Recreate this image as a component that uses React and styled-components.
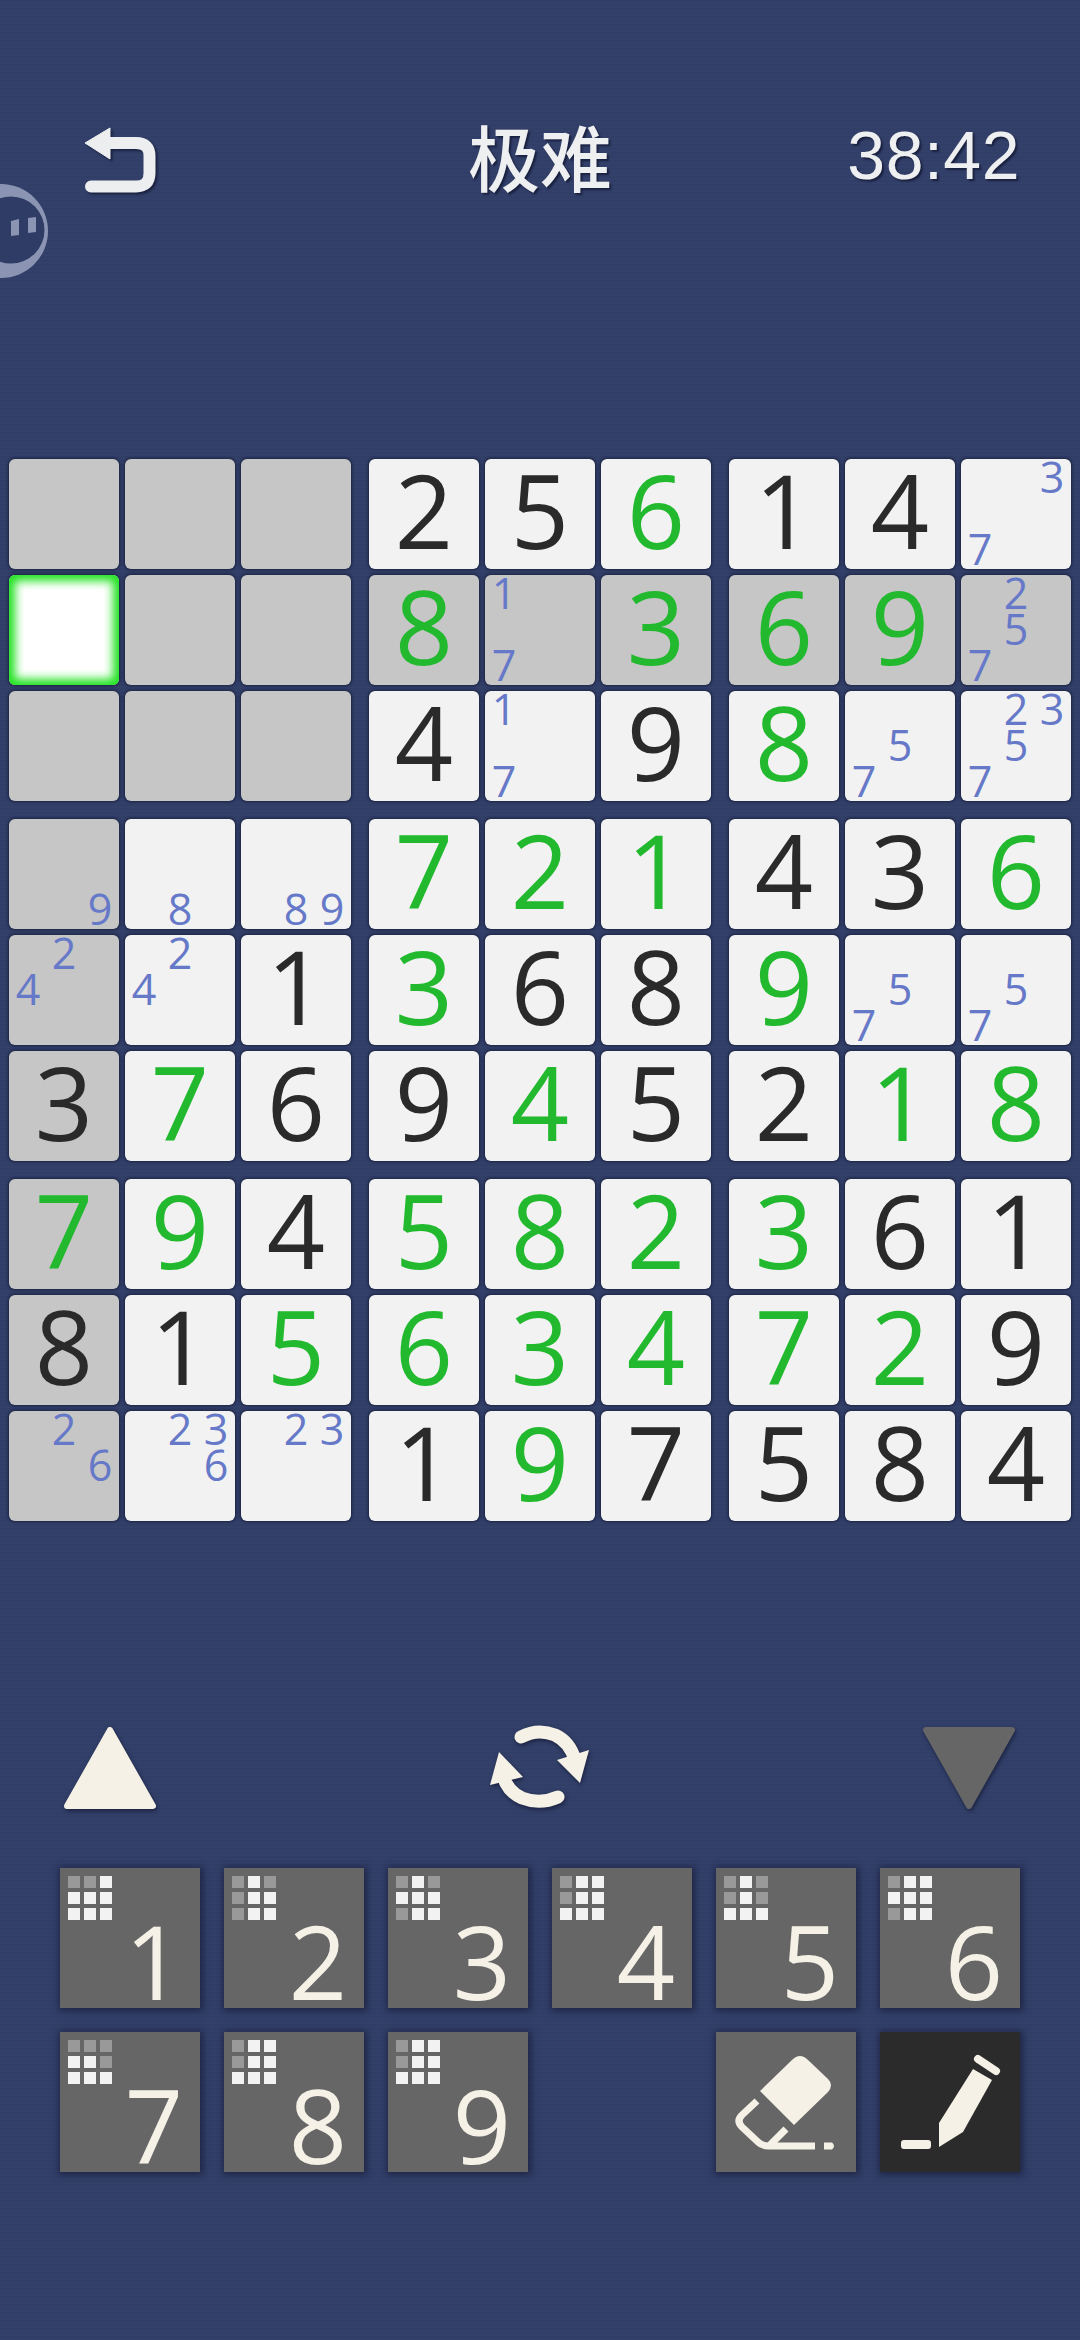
import React from 'react';
import styled, { createGlobalStyle, css } from 'styled-components';

const GlobalStyle = createGlobalStyle`
  html, body {
    margin: 0;
    padding: 0;
    background: #323f68;
  }
`;

const DIGIT_FONT = `"Open Sans", "Noto Sans", sans-serif`;

const Page = styled.div`
  position: relative;
  width: 1080px;
  height: 2340px;
  overflow: hidden;
  padding-top: 120px;
  box-sizing: border-box;
  background: repeating-linear-gradient(0deg, #334069 0 2px, #313e67 2px 4px);
`;

const FloatBall = styled.svg`
  position: absolute;
  left: 0;
  top: 180px;
  width: 52px;
  height: 102px;
`;

const Header = styled.header`
  display: grid;
  grid-template-columns: 1fr auto 1fr;
  align-items: center;
  height: 80px;
  padding: 0 62px;
`;

const BackIcon = styled.svg`
  width: 74px;
  height: 67px;
  margin-left: 22px;
  filter: drop-shadow(2px 2px 1px #1a2140);
`;

const Title = styled.h1`
  margin: 0 0 10px;
  font: 500 72px/70px "Noto Sans CJK SC", sans-serif;
  color: #eeeff0;
  text-shadow: 2px 2px 2px #1a2140;
`;

const Timer = styled.div`
  justify-self: end;
  margin: 0 -2px 10px 0;
  font: 400 68px/70px "Liberation Sans", sans-serif;
  letter-spacing: 0.5px;
  color: #eeeff0;
  text-shadow: 2px 2px 2px #1a2140;
`;

const Board = styled.section`
  display: grid;
  grid-template-columns: repeat(3, 342px);
  gap: 18px;
  margin-top: 259px;
  padding: 0 9px;
`;

const Block = styled.div`
  display: grid;
  grid-template-columns: repeat(3, 110px);
  grid-auto-rows: 110px;
  gap: 6px;
`;

const Cell = styled.div`
  border-radius: 6px;
  background: ${p => (p.$grey ? '#c6c6c6' : '#f2f2f2')};
  box-shadow: 0 0 3px 1px #1b2240;
  ${p => p.$selected && css`
    background: #ffffff;
    box-shadow: 0 0 3px 1px #1b2240, inset 0 0 10px 6px #1fe21f;
  `}
`;

const Value = styled.div`
  font: 400 102px/102px ${DIGIT_FONT};
  text-align: center;
  color: ${p => (p.$given ? '#2a2a2a' : '#22b92f')};
`;

const Notes = styled.div`
  display: grid;
  grid-template-columns: repeat(3, 36px);
  grid-template-rows: repeat(3, 36px);
  padding: 1px;
`;

const Note = styled.span`
  grid-column: ${p => ((p.$n - 1) % 3) + 1};
  grid-row: ${p => Math.floor((p.$n - 1) / 3) + 1};
  font: 400 43px/34px ${DIGIT_FONT};
  text-align: center;
  color: #6679c8;
`;

const Controls = styled.div`
  display: flex;
  align-items: center;
  justify-content: space-between;
  height: 95px;
  margin-top: 199px;
  padding: 0 64px 0 63px;
`;

const ControlIcon = styled.svg`
  display: block;
  filter: drop-shadow(1px 2px 2px #1a2140);
`;

const Pad = styled.div`
  display: grid;
  grid-template-columns: repeat(6, 140px);
  grid-auto-rows: 140px;
  gap: 24px;
  margin-top: 53px;
  padding-left: 60px;
`;

const Key = styled.button`
  display: flex;
  flex-direction: column;
  justify-content: space-between;
  width: 140px;
  height: 140px;
  padding: 8px 0 8px 8px;
  border: 0;
  box-sizing: border-box;
  grid-column: ${p => p.$col || 'auto'};
  background: ${p => (p.$active ? '#2b2b2b' : '#666666')};
  box-shadow: 1px 1px 7px 2px rgba(24, 30, 60, 0.75);
`;

const IconKey = styled(Key)`
  padding: 0;
`;

const MiniGrid = styled.div`
  display: grid;
  grid-template-columns: repeat(3, 12px);
  grid-auto-rows: 12px;
  gap: 4px;
`;

const MiniDot = styled.i`
  background: ${p => (p.$dim ? '#999999' : '#f2f2f2')};
`;

const KeyDigit = styled.span`
  align-self: flex-end;
  width: 60px;
  margin-right: 16px;
  font: 400 102px/79px ${DIGIT_FONT};
  text-align: center;
  color: #f5f1e6;
`;

// g = green (entered), k = black (given), arrays are pencil notes, null = empty
const g = v => ({ v, given: false });
const k = v => ({ v, given: true });

const rows = [
  [null, null, null, k(2), k(5), g(6), k(1), k(4), [3, 7]],
  [null, null, null, g(8), [1, 7], g(3), g(6), g(9), [2, 5, 7]],
  [null, null, null, k(4), [1, 7], k(9), g(8), [5, 7], [2, 3, 5, 7]],
  [[9], [8], [8, 9], g(7), g(2), g(1), k(4), k(3), g(6)],
  [[2, 4], [2, 4], k(1), g(3), k(6), k(8), g(9), [5, 7], [5, 7]],
  [k(3), g(7), k(6), k(9), g(4), k(5), k(2), g(1), g(8)],
  [g(7), g(9), k(4), g(5), g(8), g(2), g(3), k(6), k(1)],
  [k(8), k(1), g(5), g(6), g(3), g(4), g(7), g(2), k(9)],
  [[2, 6], [2, 3, 6], [2, 3], k(1), g(9), k(7), k(5), k(8), k(4)],
];

// which squares of the little 3x3 are dimmed on each number key
const padKeys = [
  { n: 1, dim: [0, 1] },
  { n: 2, dim: [0, 2, 3, 6] },
  { n: 3, dim: [0, 2, 6] },
  { n: 4, dim: [0, 3] },
  { n: 5, dim: [0, 2, 3, 5] },
  { n: 6, dim: [0, 6] },
  { n: 7, dim: [0, 1, 2, 5] },
  { n: 8, dim: [0, 3] },
  { n: 9, dim: [0, 3] },
];

const isGrey = (r, c) => r === 1 || c === 0 || (r < 3 && c < 3);

const SudokuCell = ({ data, r, c }) => {
  const selected = r === 1 && c === 0;
  return (
    <Cell $grey={isGrey(r, c)} $selected={selected}>
      {Array.isArray(data) && (
        <Notes>
          {data.map(n => <Note key={n} $n={n}>{n}</Note>)}
        </Notes>
      )}
      {data && !Array.isArray(data) && <Value $given={data.given}>{data.v}</Value>}
    </Cell>
  );
};

const blocks = [0, 1, 2].flatMap(br => [0, 1, 2].map(bc => ({ br, bc })));

const NumberKey = ({ n, dim }) => (
  <Key>
    <MiniGrid>
      {Array.from({ length: 9 }, (_, i) => <MiniDot key={i} $dim={dim.includes(i)} />)}
    </MiniGrid>
    <KeyDigit>{n}</KeyDigit>
  </Key>
);

const App = () => (
  <Page>
    <GlobalStyle />
    <FloatBall viewBox="0 180 52 102">
      <circle cx="1" cy="231" r="47" fill="#8b95b3" />
      <circle cx="11" cy="230" r="33.5" fill="#2f3c66" />
      <path d="M11 221 L19 219 V235 L11 236 Z M28 218 L36 217 V232 L28 233 Z" fill="#8b95b3" />
    </FloatBall>

    <Header>
      <BackIcon viewBox="84 17 74 67">
        <path d="M85 33 L110 18 V49 Z" fill="#eceef0" stroke="#eceef0" strokeWidth="1" strokeLinejoin="round" />
        <path d="M105 33 H136 Q149.5 33 149.5 46 V63 Q149.5 76.5 136 76.5 H91" fill="none" stroke="#eceef0" strokeWidth="12" strokeLinecap="round" />
      </BackIcon>
      <Title>极难</Title>
      <Timer>38:42</Timer>
    </Header>

    <Board>
      {blocks.map(({ br, bc }) => (
        <Block key={`${br}-${bc}`}>
          {[0, 1, 2].flatMap(i => [0, 1, 2].map(j => {
            const r = br * 3 + i;
            const c = bc * 3 + j;
            return <SudokuCell key={c} data={rows[r][c]} r={r} c={c} />;
          }))}
        </Block>
      ))}
    </Board>

    <Controls>
      <ControlIcon width="94" height="84" viewBox="0 0 94 84">
        <path d="M47 4 L90 80 H4 Z" fill="#f5f1e6" stroke="#f5f1e6" strokeWidth="6" strokeLinejoin="round" />
      </ControlIcon>
      <ControlIcon width="110" height="95" viewBox="15 20 110 95">
        <path d="M51 37 Q68 28 85 35 Q100 42 105 60" fill="none" stroke="#f5f1e6" strokeWidth="13" strokeLinecap="round" />
        <path d="M119 50 L87 60 L110 83 Z" fill="#f5f1e6" />
        <path d="M88 97 Q70 105 52 98 Q38 92 33 76" fill="none" stroke="#f5f1e6" strokeWidth="13" strokeLinecap="round" />
        <path d="M29 52 L53 77 L20 85 Z" fill="#f5f1e6" />
      </ControlIcon>
      <ControlIcon width="94" height="84" viewBox="0 0 94 84">
        <path d="M47 80 L90 4 H4 Z" fill="#666666" stroke="#666666" strokeWidth="6" strokeLinejoin="round" />
      </ControlIcon>
    </Controls>

    <Pad>
      {padKeys.map(key => <NumberKey key={key.n} n={key.n} dim={key.dim} />)}
      <IconKey $col={5}>
        <svg width="140" height="140" viewBox="0 0 140 140">
          <path d="M44 59 L76 28 Q84 20 92 28 L112 47 Q118 53 112 60 L78 93 Z" fill="#f5f1e6" />
          <path d="M41 69 L26 83 Q20 89 26 95 L42 110 Q46 114 52 114 H99" fill="none" stroke="#f5f1e6" strokeWidth="7" />
          <path d="M70 97 L54 113" fill="none" stroke="#f5f1e6" strokeWidth="7" />
          <path d="M108 110.5 H116 Q120 114 116 117.5 H108 Z" fill="#f5f1e6" />
        </svg>
      </IconKey>
      <IconKey $active>
        <svg width="140" height="140" viewBox="0 0 140 140">
          <path d="M59 115 V91 L93 37 L112 48 L83 100 Z" fill="#f5f1e6" />
          <path d="M98 27 L116 39" fill="none" stroke="#f5f1e6" strokeWidth="8" strokeLinecap="round" />
          <rect x="21" y="108" width="30" height="9" rx="3" fill="#f5f1e6" />
        </svg>
      </IconKey>
    </Pad>
  </Page>
);

export default App;
